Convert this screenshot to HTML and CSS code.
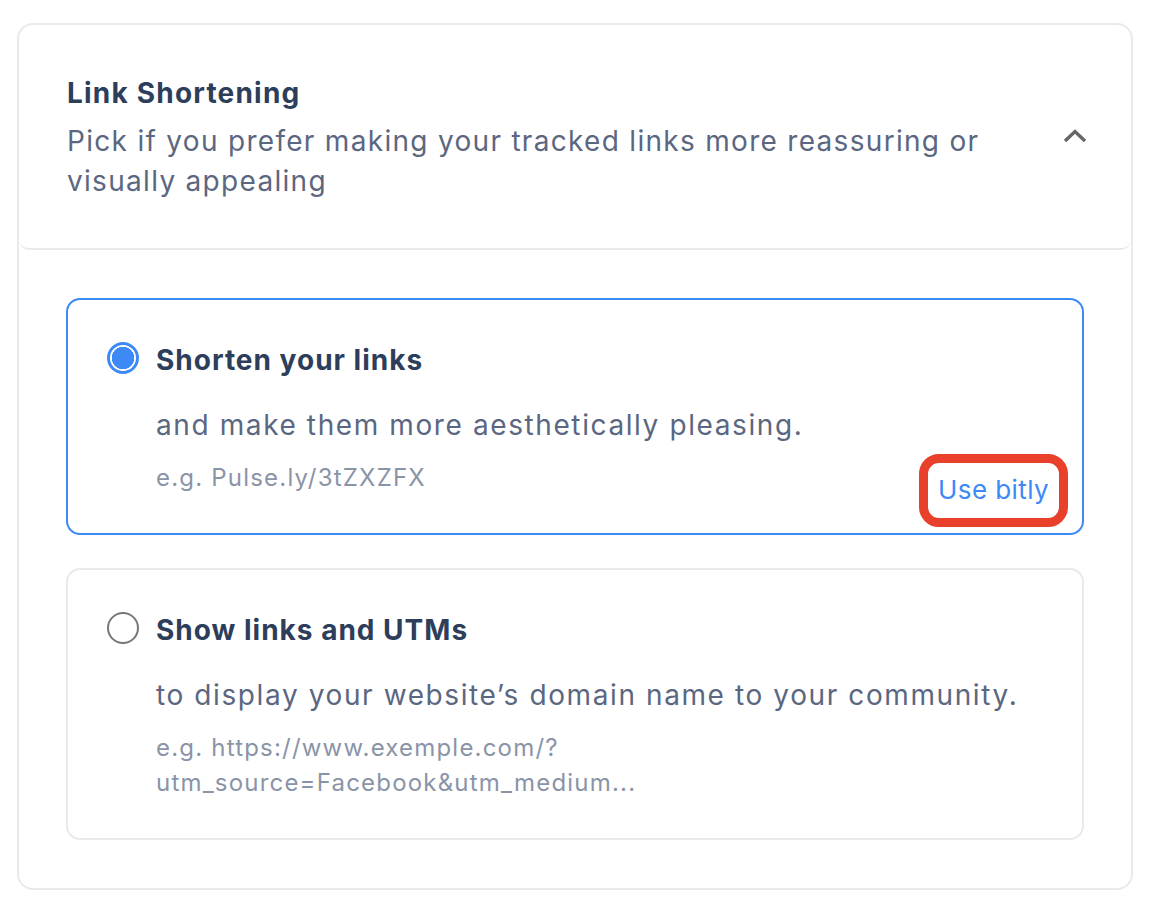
FILE: index.html
```html
<!DOCTYPE html>
<html lang="en">
<head>
<meta charset="utf-8">
<title>Link Shortening</title>
<link rel="stylesheet" href="styles.css">
</head>
<body>
<section class="panel">
  <header class="panel-head">
    <div class="head-text">
      <h2 class="head-title">Link Shortening</h2>
      <p class="head-sub">Pick if you prefer making your tracked links more reassuring or visually appealing</p>
    </div>
    <svg class="chevron" width="24" height="14" viewBox="0 0 24 14" aria-hidden="true">
      <path d="M2 12 L12 2.5 L22 12" fill="none" stroke="#666" stroke-width="3.4" stroke-linecap="butt" stroke-linejoin="miter"/>
    </svg>
  </header>
  <div class="panel-body">
    <label class="option option-active">
      <div class="option-row">
        <span class="radio radio-on"></span>
        <span class="option-title">Shorten your links</span>
      </div>
      <p class="option-desc">and make them more aesthetically pleasing.</p>
      <div class="example-row">
        <p class="option-example">e.g. Pulse.ly/3tZXZFX</p>
        <a class="bitly" href="#">Use bitly</a>
      </div>
    </label>
    <label class="option">
      <div class="option-row">
        <span class="radio"></span>
        <span class="option-title">Show links and UTMs</span>
      </div>
      <p class="option-desc">to display your website’s domain name to your community.</p>
      <p class="option-example">e.g. https://www.exemple.com/?<br>utm_source=Facebook&amp;utm_medium...</p>
    </label>
  </div>
</section>
</body>
</html>
```
FILE: styles.css
```css
* { box-sizing: border-box; }
html, body { margin: 0; padding: 0; background: #fff; }
body {
  font-family: "Inter", "Noto Sans", sans-serif;
  padding: 23px 17px 0 17px;
}
.panel {
  width: 1116px;
  border: 2px solid #e9e9ee;
  border-radius: 16px;
  background: #fff;
}
.panel-head {
  display: flex;
  align-items: center;
  justify-content: space-between;
  height: 225px;
  padding: 0 44px 0 48px;
  border-bottom: 2px solid #e9e9ee;
  border-radius: 0 0 10px 10px;
}
.head-text { max-width: 960px; }
.head-title {
  margin: 0 0 8px 0;
  font-size: 28px;
  line-height: 40px;
  font-weight: 700;
  letter-spacing: 1.2px;
  color: #2d3e5b;
}
.head-sub {
  margin: 0;
  font-size: 28px;
  line-height: 40px;
  font-weight: 400;
  letter-spacing: 1.3px;
  color: #5b6781;
}
.chevron { display: block; margin-bottom: 2px; }
.panel-body {
  display: flex;
  flex-direction: column;
  gap: 33px;
  padding: 48px 47px 48px 47px;
}
.option {
  display: block;
  border: 2px solid #e9e9ee;
  border-radius: 14px;
  padding: 40px 14px 38px 39px;
}
.option-active { border-color: #3d8af7; }
.option-row {
  display: flex;
  align-items: center;
  gap: 17px;
}
.radio {
  width: 32px;
  height: 32px;
  border-radius: 50%;
  border: 2.5px solid #777;
  flex: none;
  margin-top: -5px;
}
.radio-on {
  border: 3px solid #3d8af7;
  background: radial-gradient(circle, #3d8af7 0 11px, #fff 11.5px);
}
.option-title {
  font-size: 28px;
  line-height: 40px;
  font-weight: 700;
  letter-spacing: 1px;
  color: #2d3e5b;
}
.option-desc {
  margin: 25px 0 0 49px;
  font-size: 28px;
  line-height: 40px;
  letter-spacing: 1.6px;
  color: #5b6781;
}
.option-example {
  margin: 15px 0 0 49px;
  font-size: 24px;
  line-height: 35px;
  letter-spacing: 1.2px;
  color: #8a94a7;
}
.example-row {
  display: flex;
  justify-content: space-between;
  align-items: flex-start;
}
.bitly {
  margin-top: 9px;
  margin-bottom: -32px;
  border: 9px solid #e8402a;
  border-radius: 20px;
  padding: 9px 10px 10px 10px;
  font-size: 26px;
  line-height: 36px;
  letter-spacing: 0.4px;
  color: #3d8af7;
  text-decoration: none;
}
```
